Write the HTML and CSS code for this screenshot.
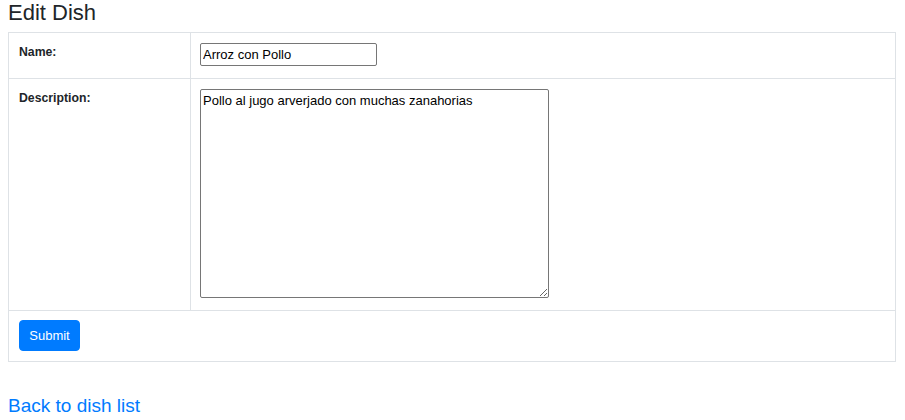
FILE: index.html
```html
<!DOCTYPE html>
<html lang="en">
<head>
<meta charset="utf-8">
<title>Edit Dish</title>
<link rel="stylesheet" href="styles.css">
</head>
<body>
<h1 class="title">Edit Dish</h1>
<form class="dish-form">
  <table class="form-table">
    <tr class="row">
      <th class="label-cell">Name:</th>
      <td class="field-cell"><input class="text-input" type="text" value="Arroz con Pollo"></td>
    </tr>
    <tr class="row">
      <th class="label-cell">Description:</th>
      <td class="field-cell"><textarea class="text-area">Pollo al jugo arverjado con muchas zanahorias</textarea></td>
    </tr>
    <tr class="row submit-row">
      <td class="submit-cell" colspan="2"><button class="btn" type="button">Submit</button></td>
    </tr>
  </table>
</form>
<p class="back"><a class="back-link" href="#">Back to dish list</a></p>
</body>
</html>
```
FILE: styles.css
```css
html, body {
  background: #fff;
}
body {
  margin: 0 8px;
  font-family: "Liberation Sans", Arial, sans-serif;
  color: #212529;
  line-height: 1.5;
}
.title {
  margin: 0 0 5.6px;
  font-size: 22px;
  font-weight: 400;
  line-height: 1.2;
  color: #212529;
}
.dish-form {
  margin: 0;
}
.form-table {
  width: 888px;
  border-collapse: separate;
  border-spacing: 0;
  border-top: 1px solid #dee2e6;
  border-left: 1px solid #dee2e6;
}
.label-cell, .field-cell, .submit-cell {
  border-right: 1px solid #dee2e6;
  border-bottom: 1px solid #dee2e6;
  vertical-align: top;
  text-align: left;
}
.label-cell {
  width: 161px;
  padding: 10px 10px 12px;
  font-size: 12.25px;
  font-weight: 700;
  line-height: 18px;
}
.field-cell {
  padding: 10px 9px 12px;
}
.text-input {
  display: block;
  box-sizing: border-box;
  width: 177px;
  height: 23px;
  margin: 0;
  padding: 1px 2px;
  border: 1px solid #767676;
  border-radius: 2px;
  font-family: "Liberation Sans", Arial, sans-serif;
  font-size: 13px;
  line-height: 19px;
  color: #000;
}
.text-area {
  display: block;
  box-sizing: border-box;
  width: 349px;
  height: 209px;
  margin: 0;
  padding: 2px;
  border: 1px solid #767676;
  border-radius: 2px;
  font-family: "Liberation Sans", Arial, sans-serif;
  font-size: 13px;
  line-height: 18px;
  color: #000;
  resize: both;
}
.submit-cell {
  padding: 9px 10px 10px;
}
.btn {
  display: block;
  box-sizing: border-box;
  width: 61px;
  height: 31px;
  padding: 0;
  margin: 0;
  border: 1px solid #007bff;
  border-radius: 4px;
  background: #007bff;
  color: #fff;
  font-family: "Liberation Sans", Arial, sans-serif;
  font-size: 13px;
  line-height: 19px;
}
.back {
  margin: 30px 0 0;
  font-size: 19px;
  line-height: 28.5px;
}
.back-link {
  color: #007bff;
  text-decoration: none;
}
```
